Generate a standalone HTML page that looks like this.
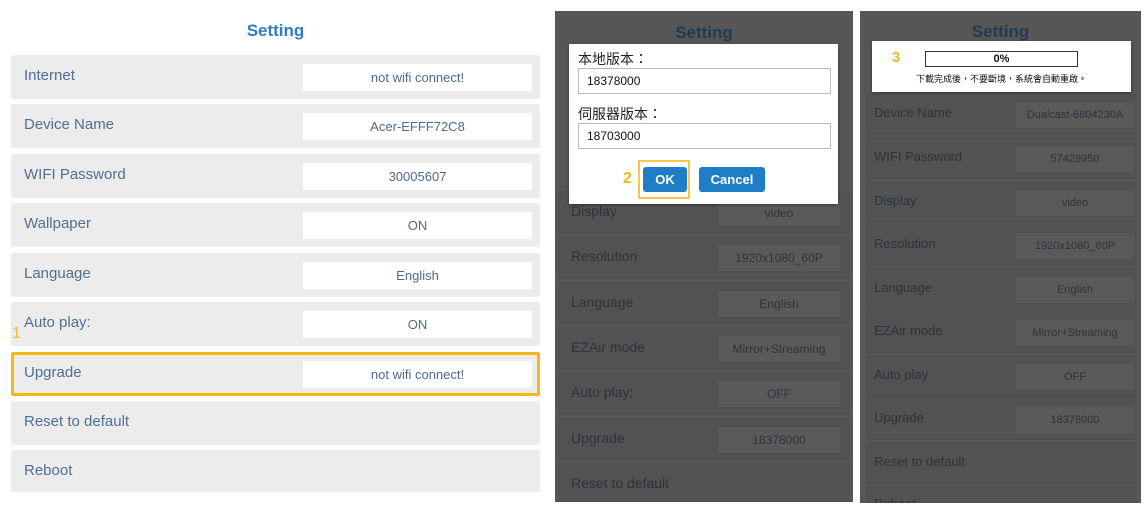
<!DOCTYPE html><html><head><style>
body{margin:0;width:1146px;height:507px;background:#fff;position:relative;overflow:hidden;font-family:"Liberation Sans","Noto Sans CJK TC",sans-serif}
div{position:absolute;box-sizing:border-box}
.r{left:11px;width:529px;height:44px;background:#ececec;border-radius:2px}
.l{left:13px;top:12px;font-size:15px;color:#4f6f93}
.v{left:292px;top:9px;width:229px;height:27px;background:#fff;text-align:center;font-size:13px;line-height:27px;color:#4f6a8a}
.t{font-size:17px;font-weight:bold;color:#2d7fc1}
.p{background:#565656;overflow:hidden}
.mr{height:42px;background:#525252;border-bottom:1px solid #4c4c4c}
.ml{font-size:14px;color:#2a333d;top:12px;left:13px}
.mv{height:26px;background:#5a5a5a;text-align:center;font-size:12px;line-height:26px;color:#2a333d;top:9px}
</style></head><body>
<div class="t" style="left:0;width:551px;top:21px;text-align:center">Setting</div>
<div class="r" style="top:55px"><div class="l">Internet</div><div class="v">not wifi connect!</div></div>
<div class="r" style="top:104px"><div class="l">Device Name</div><div class="v">Acer-EFFF72C8</div></div>
<div class="r" style="top:154px"><div class="l">WIFI Password</div><div class="v">30005607</div></div>
<div class="r" style="top:203px"><div class="l">Wallpaper</div><div class="v">ON</div></div>
<div class="r" style="top:253px"><div class="l">Language</div><div class="v">English</div></div>
<div class="r" style="top:302px"><div class="l">Auto play:</div><div class="v">ON</div></div>
<div style="left:12px;top:325px;color:#f0c030;font-size:16px">1</div>
<div class="r" style="top:352px;border:3px solid #f5b914"><div class="l" style="left:10px;top:9px">Upgrade</div><div class="v" style="left:289px;top:6px">not wifi connect!</div></div>
<div class="r" style="top:401px"><div class="l">Reset to default</div></div>
<div class="r" style="top:450px;height:42px"><div class="l">Reboot</div></div>

<div class="p" style="left:555px;top:11px;width:298px;height:491px">
<div class="t" style="left:0;width:298px;top:12px;text-align:center;color:#1f3a55">Setting</div>
<div class="mr" style="left:3px;top:180px;width:292px"><div class="ml" style="top:12px">Display</div><div class="mv" style="left:160px;width:122px">video</div></div>
<div class="mr" style="left:3px;top:225px;width:292px"><div class="ml">Resolution</div><div class="mv" style="left:160px;width:122px">1920x1080_60P</div></div>
<div class="mr" style="left:3px;top:271px;width:292px"><div class="ml">Language</div><div class="mv" style="left:160px;width:122px">English</div></div>
<div class="mr" style="left:3px;top:316px;width:292px"><div class="ml">EZAir mode</div><div class="mv" style="left:160px;width:122px">Mirror+Streaming</div></div>
<div class="mr" style="left:3px;top:361px;width:292px"><div class="ml">Auto play:</div><div class="mv" style="left:160px;width:122px">OFF</div></div>
<div class="mr" style="left:3px;top:407px;width:292px"><div class="ml">Upgrade</div><div class="mv" style="left:160px;width:122px">18378000</div></div>
<div class="mr" style="left:3px;top:452px;width:292px;height:39px"><div class="ml">Reset to default</div></div>
</div>
<div style="left:569px;top:44px;width:269px;height:160px;background:#fff;box-shadow:0 1px 3px rgba(0,0,0,.4)">
<div style="left:9px;top:8px;font-size:14px;line-height:14px;color:#222">本地版本：</div>
<div style="left:9px;top:24px;width:253px;height:26px;border:1px solid #bbb;font-size:12px;line-height:24px;padding-left:8px;color:#111">18378000</div>
<div style="left:9px;top:63px;font-size:14px;line-height:14px;color:#222">伺服器版本：</div>
<div style="left:9px;top:79px;width:253px;height:26px;border:1px solid #bbb;font-size:12px;line-height:24px;padding-left:8px;color:#111">18703000</div>
<div style="left:54px;top:126px;color:#f0b820;font-size:16px;font-weight:bold">2</div>
<div style="left:69px;top:116px;width:52px;height:39px;border:2px solid #f5c84a"></div>
<div style="left:74px;top:123px;width:44px;height:25px;background:#1f7dc6;border-radius:3px;color:#fff;font-weight:bold;font-size:13px;text-align:center;line-height:25px">OK</div>
<div style="left:130px;top:123px;width:66px;height:25px;background:#1f7dc6;border-radius:3px;color:#fff;font-weight:bold;font-size:13px;text-align:center;line-height:25px">Cancel</div>
</div>

<div class="p" style="left:860px;top:11px;width:281px;height:492px">
<div class="t" style="left:0;width:281px;top:11px;text-align:center;color:#1f3a55">Setting</div>
<div class="mr" style="left:6px;top:82px;width:270px"><div class="ml" style="left:8px;font-size:13px">Device Name</div><div class="mv" style="left:150px;width:118px;font-size:11px">Dualcast-6804230A</div></div>
<div class="mr" style="left:6px;top:126px;width:270px"><div class="ml" style="left:8px;font-size:13px">WIFI Password</div><div class="mv" style="left:150px;width:118px;font-size:11px">57429950</div></div>
<div class="mr" style="left:6px;top:170px;width:270px"><div class="ml" style="left:8px;font-size:13px">Display</div><div class="mv" style="left:150px;width:118px;font-size:11px">video</div></div>
<div class="mr" style="left:6px;top:213px;width:270px"><div class="ml" style="left:8px;font-size:13px">Resolution</div><div class="mv" style="left:150px;width:118px;font-size:11px">1920x1080_60P</div></div>
<div class="mr" style="left:6px;top:257px;width:270px"><div class="ml" style="left:8px;font-size:13px">Language</div><div class="mv" style="left:150px;width:118px;font-size:11px">English</div></div>
<div class="mr" style="left:6px;top:300px;width:270px"><div class="ml" style="left:8px;font-size:13px">EZAir mode</div><div class="mv" style="left:150px;width:118px;font-size:11px">Mirror+Streaming</div></div>
<div class="mr" style="left:6px;top:344px;width:270px"><div class="ml" style="left:8px;font-size:13px">Auto play</div><div class="mv" style="left:150px;width:118px;font-size:11px">OFF</div></div>
<div class="mr" style="left:6px;top:387px;width:270px"><div class="ml" style="left:8px;font-size:13px">Upgrade</div><div class="mv" style="left:150px;width:118px;font-size:11px">18378000</div></div>
<div class="mr" style="left:6px;top:431px;width:270px"><div class="ml" style="left:8px;font-size:13px">Reset to default</div></div>
<div class="mr" style="left:6px;top:475px;width:270px;height:40px"><div class="ml" style="left:8px;font-size:13px;top:10px">Reboot</div></div>
</div>
<div style="left:872px;top:41px;width:259px;height:51px;background:#fff;box-shadow:0 1px 3px rgba(0,0,0,.4)">
<div style="left:20px;top:8px;color:#f0b820;font-size:15px;font-weight:bold">3</div>
<div style="left:53px;top:10px;width:153px;height:16px;border:1px solid #333;text-align:center;font-size:11px;line-height:14px;font-weight:bold;color:#111">0%</div>
<div style="left:0;width:259px;top:31px;text-align:center;font-size:9px;color:#111">下載完成後，不要斷境，系統會自動重啟。</div>
</div>
</body></html>
